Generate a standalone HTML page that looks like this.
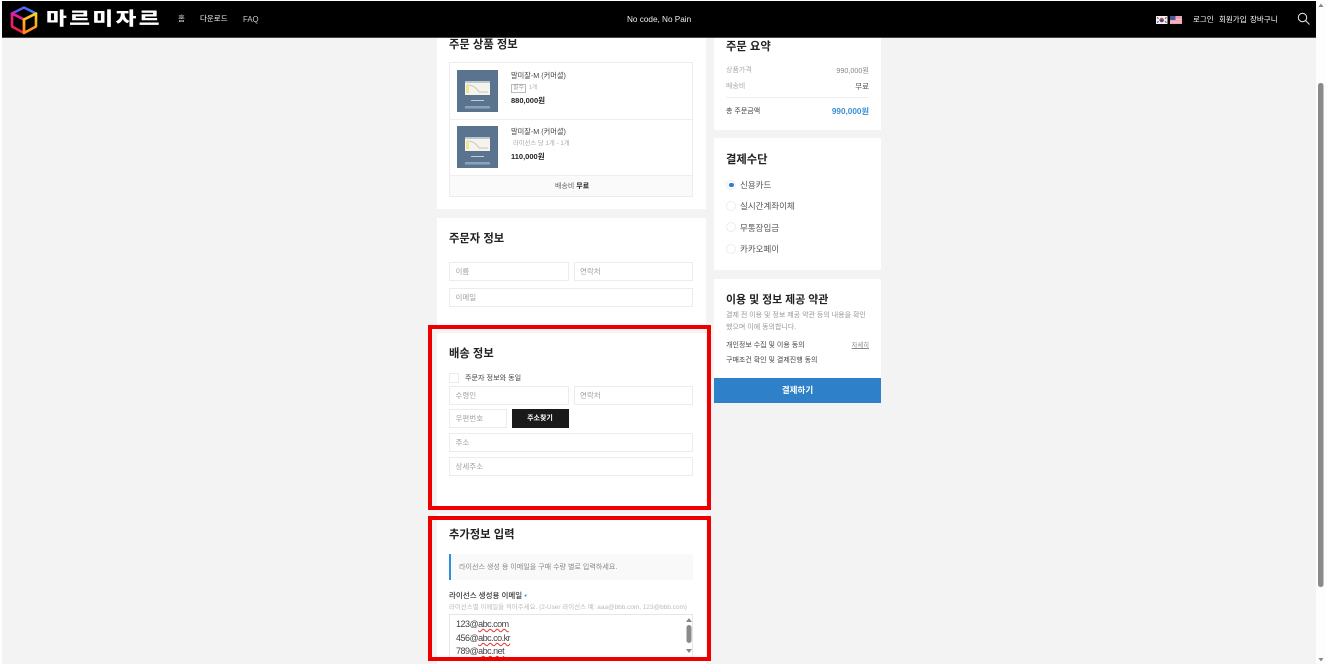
<!DOCTYPE html>
<html lang="ko"><head><meta charset="utf-8"><title>주문</title>
<style>
html,body{margin:0;padding:0;width:1326px;height:664px;overflow:hidden;background:#fff}
body{position:relative;font-family:"Liberation Sans","Noto Sans CJK KR",sans-serif;color:#444}
#w{position:absolute;left:0;top:0;width:1326px;height:664px;filter:blur(.3px)}
div,span.a{position:absolute;box-sizing:border-box}
.t{position:absolute;white-space:nowrap;height:14px;line-height:14px;font-size:7.5px}
.h{font-size:11.3px;font-weight:700;color:#222;height:20px;line-height:20px}
.c{background:#fff}
.i{border:1px solid #ececec;background:#fff;color:#a0a0a0;font-size:7.5px;padding-left:5.5px;display:flex;align-items:center}
.n{color:#fff}
.r{border:1px solid #ececec;border-radius:50%;width:10px;height:10px;left:726px;background:#fff}
.red{border:4.5px solid #ee0000;left:428px;width:283px}
.e{font-size:9px;color:#444;letter-spacing:-.5px}
.e span{text-decoration:underline wavy #e03030 .6px}
</style></head><body><div id="w">
<div style="left:2px;top:1px;width:1314px;height:663px;background:#f3f3f3"></div>

<!-- left cards -->
<div class="c" style="left:437px;top:30px;width:268.5px;height:179px"></div>
<div class="t h" style="left:449px;top:35px">주문 상품 정보</div>
<div style="left:449px;top:62px;width:244px;height:135px;border:1px solid #ececec"></div>
<div style="left:450px;top:119px;width:242px;height:1px;background:#eee"></div>
<div style="left:450px;top:175px;width:242px;height:21px;background:#fafafa;border-top:1px solid #eee"></div>

<svg style="position:absolute;left:457px;top:70px" width="41" height="42" viewBox="0 0 41 42"><rect width="41" height="42" fill="#5a7490"/><rect x="8" y="11" width="25" height="14" fill="#f4f4ec"/><rect x="8" y="11" width="25" height="2" fill="#bcc6cc"/><path d="M10 15q8 0 12 7h9" stroke="#c8c8c0" fill="none"/><rect x="9" y="15" width="3" height="8" fill="#f0e68c"/><rect x="14" y="30" width="13" height="1" fill="#c4ced8"/><rect x="8" y="36" width="25" height="2.5" fill="#8ea2b6"/></svg>
<svg style="position:absolute;left:457px;top:126px" width="41" height="42" viewBox="0 0 41 42"><rect width="41" height="42" fill="#5a7490"/><rect x="8" y="11" width="25" height="14" fill="#f4f4ec"/><rect x="8" y="11" width="25" height="2" fill="#bcc6cc"/><path d="M10 15q8 0 12 7h9" stroke="#c8c8c0" fill="none"/><rect x="9" y="15" width="3" height="8" fill="#f0e68c"/><rect x="14" y="30" width="13" height="1" fill="#c4ced8"/><rect x="8" y="36" width="25" height="2.5" fill="#8ea2b6"/></svg>

<div class="t" style="left:511px;top:69px;color:#444;font-size:7.200px">말미잘-M (커머셜)</div>
<div style="left:511px;top:84px;width:15px;height:9px;border:1px solid #bbb;color:#999;font-size:6px;line-height:7px;text-align:center">필수</div>
<div class="t" style="left:529px;top:81px;color:#aaa;font-size:5.500px">1개</div>
<div class="t" style="left:511px;top:94px;color:#222;font-weight:700;font-size:7.500px">880,000원</div>
<div class="t" style="left:511px;top:125px;color:#444;font-size:7.200px">말미잘-M (커머셜)</div>
<div class="t" style="left:513px;top:137px;color:#aaa;font-size:6.300px">라이선스 당 1개 - 1개</div>
<div class="t" style="left:511px;top:150px;color:#222;font-weight:700;font-size:7.500px">110,000원</div>
<div class="t" style="left:555px;top:180px;color:#666;font-size:7px">배송비 <b style="color:#222">무료</b></div>

<div class="c" style="left:437px;top:218px;width:268.5px;height:107px"></div>
<div class="t h" style="left:449px;top:229px">주문자 정보</div>
<div class="i" style="left:449px;top:262px;width:119.5px;height:19px">이름</div>
<div class="i" style="left:573.5px;top:262px;width:119.5px;height:19px">연락처</div>
<div class="i" style="left:449px;top:288px;width:244px;height:19px">이메일</div>

<div class="c" style="left:437px;top:333px;width:268.5px;height:173px"></div>
<div class="t h" style="left:449px;top:344px">배송 정보</div>
<div style="left:449px;top:373px;width:10px;height:10px;border:1px solid #ececec"></div>
<div class="t" style="left:465px;top:371px;font-size:7.100px">주문자 정보와 동일</div>
<div class="i" style="left:449px;top:386px;width:119.5px;height:18.5px">수령인</div>
<div class="i" style="left:573.5px;top:386px;width:119.5px;height:18.5px">연락처</div>
<div class="i" style="left:449px;top:409px;width:58px;height:19px">우편번호</div>
<div style="left:511.5px;top:409px;width:57px;height:19px;background:#1a1a1a;color:#fff;font-size:7px;font-weight:700;text-align:center;line-height:20px">주소찾기</div>
<div class="i" style="left:449px;top:433px;width:244px;height:19px">주소</div>
<div class="i" style="left:449px;top:457px;width:244px;height:19px">상세주소</div>

<div class="c" style="left:437px;top:514px;width:268.5px;height:150px"></div>
<div class="t h" style="left:449px;top:525px">추가정보 입력</div>
<div style="left:449px;top:554px;width:244px;height:26px;background:#f9f9f9;border-left:2.5px solid #2b90e0"></div>
<div class="t" style="left:459px;top:560.500px;color:#888;font-size:7.050px">라이선스 생성 용 이메일을 구매 수량 별로 입력하세요.</div>
<div class="t" style="left:449px;top:589px;font-weight:500;color:#333">라이선스 생성용 이메일 <span style="color:#2b90e0">•</span></div>
<div class="t" style="left:449px;top:600.500px;color:#bbb;font-size:6.450px">라이선스별 이메일을 적어주세요. (2-User 라이선스 예: aaa@bbb.com, 123@bbb.com)</div>
<div style="left:449px;top:614px;width:244px;height:44px;border:1px solid #e6e6e6;background:#fff"></div>
<div class="t e" style="left:456px;top:617px">123@<span>abc.com</span></div>
<div class="t e" style="left:456px;top:631px">456@<span>abc.co.kr</span></div>
<div class="t e" style="left:456px;top:644px">789@<span>abc.net</span></div>
<svg style="position:absolute;left:685px;top:616px" width="8" height="41"><path d="M1 6l3-4 3 4z" fill="#888"/><rect x="1.5" y="9" width="5" height="18" rx="2.5" fill="#8a8a8a"/><path d="M1 33l3 4 3-4z" fill="#888"/></svg>

<!-- right cards -->
<div class="c" style="left:714px;top:30px;width:167px;height:100px"></div>
<div class="t h" style="left:726px;top:36.500px">주문 요약</div>
<div class="t" style="left:726px;top:64px;color:#aaa;font-size:7px">상품가격</div>
<div class="t" style="right:457px;top:64px;color:#888;font-size:7.200px">990,000원</div>
<div class="t" style="left:726px;top:80px;color:#aaa;font-size:7px">배송비</div>
<div class="t" style="right:457px;top:80px;color:#555;font-size:7.500px">무료</div>
<div style="left:726px;top:97px;width:143px;height:1px;background:#eee"></div>
<div class="t" style="left:726px;top:104.500px;font-size:7px">총 주문금액</div>
<div class="t" style="right:457px;top:105px;color:#3a8fd5;font-weight:700;font-size:8.200px">990,000원</div>

<div class="c" style="left:714px;top:138px;width:167px;height:132px"></div>
<div class="t h" style="left:726px;top:149.500px">결제수단</div>
<div class="r" style="top:180px"></div><div style="left:729px;top:182.5px;width:4.5px;height:4.5px;border-radius:50%;background:#2a7fc8"></div>
<div class="r" style="top:201px"></div><div class="r" style="top:222px"></div><div class="r" style="top:244px"></div>
<div class="t" style="left:740px;top:177.5px;font-size:8.5px;color:#555">신용카드</div>
<div class="t" style="left:740px;top:199px;font-size:8.5px;color:#555">실시간계좌이체</div>
<div class="t" style="left:740px;top:220.5px;font-size:8.5px;color:#555">무통장입금</div>
<div class="t" style="left:740px;top:242px;font-size:8.5px;color:#555">카카오페이</div>

<div class="c" style="left:714px;top:279px;width:167px;height:100px"></div>
<div class="t h" style="left:726px;top:290px;font-size:10.900px">이용 및 정보 제공 약관</div>
<div class="t" style="left:726px;top:308.500px;color:#999;font-size:7px">결제 전 이용 및 정보 제공 약관 등의 내용을 확인</div>
<div class="t" style="left:726px;top:320.500px;color:#999;font-size:7px">했으며 이에 동의합니다.</div>
<div class="t" style="left:726px;top:338.500px;font-size:7px">개인정보 수집 및 이용 동의</div>
<div class="t" style="right:457px;top:338.500px;color:#888;font-size:6.300px;text-decoration:underline">자세히</div>
<div class="t" style="left:726px;top:353.500px;font-size:7px">구매조건 확인 및 결제진행 동의</div>
<div style="left:714px;top:378px;width:167px;height:25px;background:#2e80c8;color:#fff;font-weight:700;font-size:8.5px;text-align:center;line-height:25px">결제하기</div>

<!-- header -->
<div style="left:2px;top:1px;width:1314px;height:37px;background:#000;border-bottom:1px solid #444"></div>
<svg style="position:absolute;left:9px;top:5px" width="30" height="30" viewBox="0 0 30 30" fill="none" stroke-width="2.6" stroke-linejoin="round">
<defs><linearGradient id="g1" x1="0" y1="0" x2="1" y2="0"><stop offset="0" stop-color="#7a3cf0"/><stop offset="1" stop-color="#2a8cf5"/></linearGradient>
<linearGradient id="g2" x1="0" y1="0" x2="0" y2="1"><stop offset="0" stop-color="#f0189a"/><stop offset="1" stop-color="#f0203c"/></linearGradient>
<linearGradient id="g3" x1="0" y1="0" x2="0" y2="1"><stop offset="0" stop-color="#ffd21e"/><stop offset="1" stop-color="#ff8a14"/></linearGradient></defs>
<path d="M15 2.5L27 8.5 15 14.5 3 8.5Z" stroke="url(#g1)"/>
<path d="M3 8.5V21.5L15 28V14.5Z" stroke="url(#g2)"/>
<path d="M27 8.5V21.5L15 28V14.5Z" stroke="url(#g3)"/></svg>
<div class="t n" style="left:46px;top:9px;height:20px;line-height:20px;font-size:18px;font-weight:900;letter-spacing:2px;transform:scale(1.25,1);transform-origin:0 50%">마르미자르</div>
<div class="t n" style="left:178px;top:12px;font-size:7.5px;color:#ddd">홈</div>
<div class="t n" style="left:200px;top:12px;font-size:7.5px">다운로드</div>
<div class="t n" style="left:243px;top:12.5px;font-size:7.800px;color:#ccc">FAQ</div>
<div class="t n" style="left:627px;top:13px;font-size:8.200px;color:#eee">No code, No Pain</div>
<svg style="position:absolute;left:1156px;top:16px" width="27" height="8"><rect width="11.5" height="8" fill="#f2f2f2"/><circle cx="5.7" cy="4" r="2.2" fill="#c44"/><path d="M3.5 4a2.2 2.2 0 0 0 4.400 0z" fill="#34a"/><path d="M1 1.500l1.500 1M1 6.500l1.500-1M10.500 1.500L9 2.500M10.500 6.500L9 5.500" stroke="#333"/><rect x="14" width="12" height="8" fill="#f0a0a8"/><rect x="14" y="3" width="12" height="1" fill="#fbe"/><rect x="14" y="5.500" width="12" height="1" fill="#fbe"/><rect x="14" width="5.500" height="4" fill="#4a5a9a"/></svg>
<div class="t n" style="left:1193px;top:13px;font-size:7.500px">로그인</div>
<div class="t n" style="left:1219px;top:13px;font-size:7.500px">회원가입</div>
<div class="t n" style="left:1250px;top:13px;font-size:7.500px">장바구니</div>
<svg style="position:absolute;left:1297px;top:12px" width="14" height="14" fill="none" stroke="#ddd" stroke-width="1.1"><circle cx="5.500" cy="5.500" r="4.200"/><path d="M8.500 8.500L12.500 12.500"/></svg>

<!-- red highlights -->
<div class="red" style="top:325px;height:185px"></div>
<div class="red" style="top:516px;height:145px"></div>

<!-- page scrollbar -->
<div style="left:1316px;top:0;width:10px;height:664px;background:#fdfdfd"></div>
<svg style="position:absolute;left:1316px;top:0" width="10" height="664"><path d="M2.500 7L5 3.500 7.500 7z" fill="#888"/><rect x="2" y="83" width="5.500" height="504" rx="2.500" fill="#8a8a8a"/><path d="M2.500 658L5 661.500 7.500 658z" fill="#888"/></svg>
</div></body></html>
